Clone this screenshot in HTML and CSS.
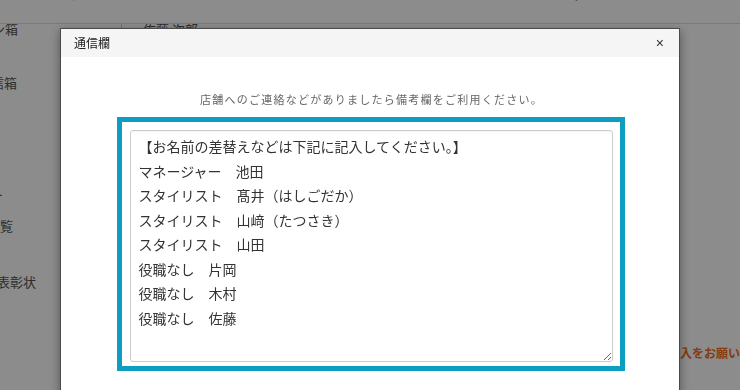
FILE: index.html
```html
<!DOCTYPE html>
<html lang="ja">
<head>
<meta charset="utf-8">
<title>通信欄</title>
<link rel="stylesheet" href="styles.css">
</head>
<body>
<div class="page">
  <header class="topbar">
    <span class="tb tb1">トップ</span>
    <span class="tb tb2">・・・・・・・</span>
    <span class="tb tb3">ログ</span>
    <span class="tb tb4">ー</span>
    <span class="tb tb5">ト</span>
  </header>
  <div class="main">
    <nav class="side">
      <div class="side-item s1"><span>デザイン箱</span></div>
      <div class="side-item s2"><span>送信箱</span></div>
      <div class="side-item s3"><span>メンバー</span></div>
      <div class="side-item s4"><span>スタッフ一覧</span></div>
      <div class="side-item s5"><span>受賞表彰状</span></div>
    </nav>
    <section class="content">
      <div class="name">佐藤 次郎</div>
      <div class="notice">ご記入をお願いします。</div>
    </section>
  </div>
</div>
<div class="overlay"></div>
<div class="modal">
  <div class="modal-header">
    <h4 class="modal-title">通信欄</h4>
    <button class="close" type="button">×</button>
  </div>
  <div class="modal-body">
    <p class="lead">店舗へのご連絡などがありましたら備考欄をご利用ください。</p>
    <div class="highlight">
<textarea class="memo">【お名前の差替えなどは下記に記入してください。】
マネージャー　池田
スタイリスト　髙井（はしごだか）
スタイリスト　山﨑（たつさき）
スタイリスト　山田
役職なし　片岡
役職なし　木村
役職なし　佐藤</textarea>
    </div>
  </div>
</div>
</body>
</html>
```
FILE: styles.css
```css
* { box-sizing: border-box; }
html, body {
  margin: 0;
  padding: 0;
  width: 740px;
  height: 390px;
  overflow: hidden;
  background: #fff;
  font-family: "Noto Sans CJK JP", "Noto Sans", sans-serif;
  color: #555;
}
.page {
  display: grid;
  grid-template-rows: 24px 1fr;
  height: 390px;
}
.topbar {
  display: flex;
  align-items: flex-start;
  border-bottom: 1px solid #dedede;
  overflow: hidden;
  font-size: 13px;
  line-height: 13px;
}
.tb {
  margin-top: -13px;
  color: #666;
  white-space: nowrap;
  flex-shrink: 0;
}
.tb1 { margin-left: 56px; }
.tb2 { margin-left: 70px; letter-spacing: 2px; }
.tb3 { margin-left: 290px; }
.tb4 { margin-left: 40px; }
.tb5 { margin-left: 62px; }

.main {
  display: grid;
  grid-template-columns: 122px 1fr;
}
.side {
  border-right: 1px solid #cfcfcf;
  overflow: hidden;
  display: flex;
  flex-direction: column;
  font-size: 13px;
  line-height: 13px;
}
.side-item { white-space: nowrap; color: #555; }
.s1 { margin-top: -2px; }
.s1 span { margin-left: -47px; }
.s2 { margin-top: 41px; }
.s2 span { margin-left: -22px; }
.s3 { margin-top: 99px; }
.s3 span { margin-left: -49px; }
.s4 { margin-top: 18px; }
.s4 span { margin-left: -65px; }
.s5 { margin-top: 43px; font-size: 13px; }
.s5 span { margin-left: -29px; }

.content {
  display: flex;
  flex-direction: column;
  padding-left: 21px;
  font-size: 13px;
  line-height: 13px;
  overflow: hidden;
}
.name { margin-top: -2px; color: #555; }
.notice {
  margin-top: 311px;
  margin-left: 513px;
  white-space: nowrap;
  font-size: 12px;
  line-height: 13px;
  font-weight: bold;
  color: #f46a18;
}

.overlay {
  position: fixed;
  inset: 0;
  background: rgba(0, 0, 0, 0.45);
}
.modal {
  position: absolute;
  left: 60px;
  top: 28px;
  width: 620px;
  height: 420px;
  background: #fff;
  border: 1px solid #4a4a4a;
  box-shadow: 0 3px 9px rgba(0, 0, 0, 0.4);
}
.modal-header {
  display: flex;
  align-items: center;
  justify-content: space-between;
  height: 28px;
  padding: 0 15px 0 13px;
  background: #f5f5f5;
}
.modal-title {
  margin: 0;
  font-size: 12px;
  line-height: 28px;
  font-weight: normal;
  color: #222;
}
.close {
  border: 0;
  background: transparent;
  padding: 0;
  font-family: "Liberation Sans", Arial, sans-serif;
  font-size: 14px;
  line-height: 14px;
  color: #333;
  cursor: pointer;
}
.modal-body {
  padding-top: 34px;
  display: flex;
  flex-direction: column;
  align-items: center;
}
.lead {
  margin: 0;
  font-size: 11px;
  line-height: 16px;
  letter-spacing: 1.25px;
  color: #666;
  padding-left: 3px;
}
.highlight {
  margin-top: 10px;
  margin-left: 1px;
  width: 508px;
  border: 5px solid #0c9dc1;
  padding: 8px 7px 4px 8px;
}
.memo {
  display: block;
  width: 483px;
  height: 232px;
  margin: 0;
  border: 1px solid #cccccc;
  border-radius: 3px;
  padding: 3px 8px;
  font-family: "Noto Sans CJK JP", "Noto Sans", sans-serif;
  font-size: 14px;
  line-height: 24.5px;
  color: #333;
  background: #fff;
  resize: vertical;
  box-shadow: inset 0 1px 1px rgba(0, 0, 0, 0.04);
}
```
